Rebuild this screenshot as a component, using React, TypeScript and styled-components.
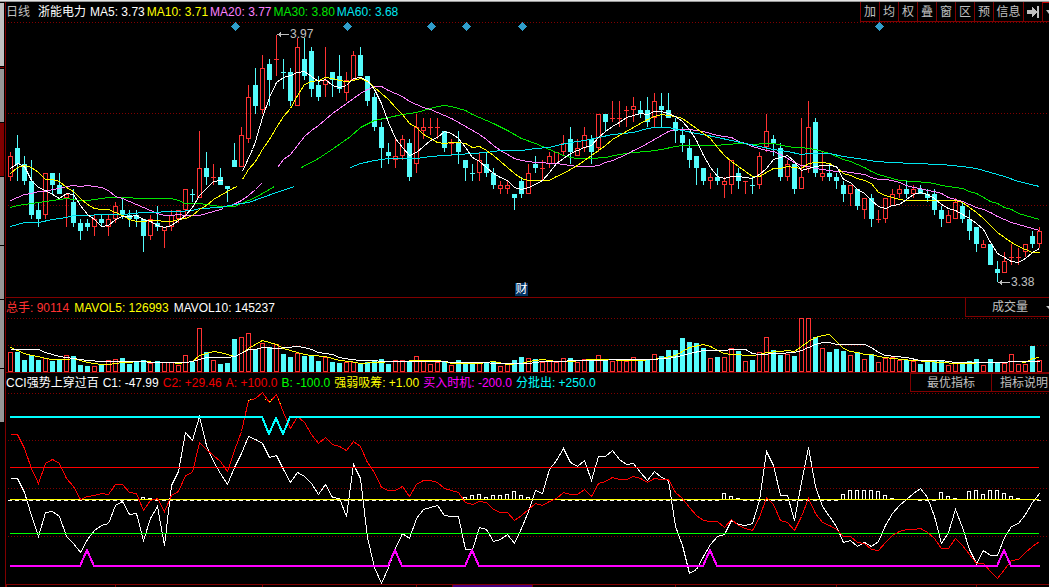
import React from "react";
import styled, { createGlobalStyle, css } from "styled-components";

/* ---------- palette ---------- */
const UP = "#ff3232";
const DOWN = "#54fcfc";
const FRAME = "#800000";
const GREY = "#c0c0c0";
const YELLOW = "#ffff00";
const PINK = "#ff80ff";
const GREEN = "#00e600";
const AQUA = "#00e6f0";

/* ---------- chart geometry ---------- */
const LEFT = 6;
const SPAN = 1043;
const STEP = 7;
const xOf = (i: number) => 10 + i * STEP;

/* ---------- data ---------- */
/* one candle: direction, high, body top, body bottom, low */
const CANDLES = `
u152,156,177,181 d135,148,164,181 d156,164,181,185 d160,181,215,219 d203,210,219,227 u173,173,215,219 d173,173,185,194
d173,185,194,194 u194,194,198,227 d189,202,223,227 d219,223,231,240 d219,223,227,231 u215,219,227,236 d215,219,223,227
u215,219,227,236 u202,206,219,223 d198,210,215,219 d210,215,219,227 d210,215,219,227 d219,219,236,252 u215,219,236,240
d206,223,227,231 u227,227,231,248 u210,215,227,231 u210,210,219,223 u189,189,210,218 d189,194,194,202 u131,168,198,198
d152,168,177,185 u164,177,177,185 d168,177,185,185 d186,186,189,202 d143,160,167,167 u127,135,167,167 u85,97,139,143
d68,85,106,114 u55,68,110,114 d59,64,80,106 u35,59,59,76 d59,72,72,89 d68,72,101,106 u38,47,106,106
d38,59,76,80 d47,51,89,97 d76,85,97,101 u47,80,85,97 d72,72,80,97 d55,76,89,93 u72,80,93,101
u51,55,80,80 d47,55,76,76 d76,76,101,106 d93,97,127,131 d122,127,148,168 d143,152,156,164 u139,156,160,168
u135,139,156,160 d139,143,177,181 u114,127,164,173 u118,127,131,139 u118,127,127,135 u118,127,127,139 d131,131,148,152
u139,143,143,156 d131,143,152,164 d160,160,168,181 d164,173,173,181 u152,160,173,181 d152,164,173,177 d168,173,185,189
u181,185,189,194 u181,185,189,194 d194,194,198,210 d177,181,194,198 u164,173,194,194 d156,164,168,173 u160,168,168,180
u152,156,164,168 u152,152,164,164 u135,143,152,156 d127,139,152,164 u139,148,156,156 u127,135,148,152 d135,139,152,164
u114,114,148,152 d114,114,122,131 u101,118,118,122 u101,118,118,127 u106,110,110,127 u97,106,110,122 d101,110,114,118
d97,110,122,127 u93,101,118,127 d93,106,110,127 d93,110,118,118 d118,122,131,143 d127,135,143,152 d139,148,160,168
d156,156,168,185 d168,168,181,185 u173,177,181,189 d168,177,181,185 u177,181,185,198 u160,160,185,194 d168,173,181,189
u181,181,181,194 d177,185,185,194 u152,156,185,189 u114,131,147,152 d135,139,143,156 d143,148,177,181 u160,164,177,181
d164,164,189,194 u118,177,189,189 u101,127,169,173 d118,122,173,177 u152,173,177,181 d164,173,177,181 d173,177,181,189
d181,185,194,202 u185,185,194,206 d189,189,206,210 u198,198,210,219 d194,198,219,227 u210,219,219,223 u198,198,219,223
u189,194,206,206 u185,189,194,198 d181,189,194,198 u185,189,194,198 d185,189,194,194 d189,194,198,202 d189,194,210,215
d206,210,219,227 u210,215,223,223 u198,202,219,219 d202,206,219,223 d210,219,231,240 d227,227,244,252 u240,244,248,248
d244,244,265,265 d261,269,273,282 u252,261,273,273 u244,257,257,265 u248,257,257,265 u244,244,252,257 d231,236,244,248
u227,231,244,248`
  .trim()
  .split(/\s+/)
  .map((c) => {
    const [high, top, bottom, low] = c.slice(1).split(",").map(Number);
    return { up: c[0] === "u", high, top, bottom, low };
  });

const VOLUME = `352 352 360 355 360 358 361 360 355 356 365 366 366 364 360 359 358 364 362 360 363 361 362 362 365 355 362 328 352
360 364 363 339 337 333 349 343 347 344 354 357 353 356 355 361 357 362 363 362
362 363 362 361 359 364 360 360 361 356 361 364 362 361 365 360 362 364 363 363 361 366 364 360 357 358 359 362 361 362 358
358 362 359 359 355 360 361 360 361 357 360 359 354 356 350 350 338 342 343
348 358 357 357 348 351 361 360 352 337 350 355 354 356 318 318 337 348 352 349 351 355 352 359 354 362 358 357 360 360 361
364 361 361 360 365 362 364 361 359 365 359 362 363 354 364 364 346 360`
  .split(/\s+/)
  .map(Number);

/* evenly spaced series: first candle index, then one level per candle */
const series = (start: number, ys: string) =>
  ys
    .trim()
    .split(/\s+/)
    .map((y, k) => `${xOf(start + k)},${y}`)
    .join(" ");

const MA5 = [
  series(0, "168 163 166 180 187 190 194 198 193 194 205 214 219 226 225 219 216 216 215 219 221 225 227 225 220 215 207 195 188 181 180") + " 222,180",
  "242,171 252,149 " +
    series(
      35,
      `141 117 97 82 77 75 72 71 76 81 79 85 87 85 78 77 80 89 103 122 138 147 155 152 146 140 137 131 133 138 147 157 161 167
      173 177 180 187 189 187 184 180 172 163 158 153 150 147 145 137 131 126 122 117 115 113 114 111 111 113 116 121 129 140 155
      167 176 178 176 176 177 178 174 168 159 157 155 161 170 168 166 165 165 166 179 182 189 193 200 206 208 205 204 199 194 192
      194 198 204 208 210 214 218 223 229 242 253 257 261 262 258 252 248`
    ),
];
const MA10 = [
  series(0, "173 167 165 167 172 179 179 181 187 191 198 204 208 209 209 212 215 219 221 221 220 220 221 221 219 218 215 209 205 199 195 191 187") + " 237,186",
  "242,179 " +
    series(
      34,
      `169 161 149 139 127 116 108 95 84 81 80 77 78 80 81 80 78 81 87 93 99 107 114 123 127 134 138 142 143 142 142 143 147
      146 150 155 161 167 173 178 180 180 180 180 176 173 169 165 160 155 150 145 139 135 131 127 123 119 116 114 115 116 118 123
      128 133 138 147 155 161 166 171 176 176 172 168 168 166 167 168 163 162 162 163 167 173 175 178 180 183 192 195 197 199 200
      200 200 200 200 200 200 200 202 207 212 218 225 232 237 242 246 249 252 252`
    ),
];
const MA20 = [
  series(0, "200 197 194 193 191 191 189 188 186 185 186 185 186 187 190 196 198 201 204 207 210 213 215 215 214 215 215 215 213 211 209") + " 223,208",
  "231,205 241,200 248,195 255,189 261,183",
  "277,167 " +
    series(
      39,
      `159 154 145 136 130 125 119 113 108 103 98 93 89 86 86 90 93 96 101 104 107 109 112 115 118 122 126 130 134 139 145 150
      154 158 160 161 162 162 163 163 164 165 166 166 166 165 162 160 157 154 150 147 143 139 135 131 129 129 129 130 131 133 135
      136 137 141 143 146 148 150 151 154 158 162 165 166 168 169 170 171 171 172 173 174 177 179 179 180 182 185 187 188 190 191
      193 197 199 201 204 207 209 212 216 219 222 224 226 228 230`
    ),
];
const MA30 = [
  series(0, "207 205 204 203 202 201 200 199 198 199 200 200 199 198 197 197 197 197 198 198 198 198 198 198 200 203 203 203 204 205 206 206 206 203 200 197 193") + " 274,186",
  `301,167 318,158 333,148 350,136 360,127 374,120 388,117 402,114 416,112 430,108 437,106 444,105 451,106 458,108 465,110 472,114
  479,117 493,123 507,130 521,138 535,143 542,146 549,149 556,152 563,155 570,157 577,158 591,158 605,157 619,154 633,152 647,151
  661,149 675,146 682,145 714,145 728,144 738,143 752,144 766,143 773,143 787,146 794,147 801,147 808,148 815,149 822,151 829,153
  836,156 843,159 850,161 857,164 864,167 871,171 878,174 885,176 892,178 899,180 913,181 927,182 934,183 941,185 955,187 962,188
  969,191 976,193 983,197 990,201 997,203 1004,207 1011,209 1018,213 1025,215 1032,217 1039,219`,
];
const MA60 = [
  `10,226 24,222 38,222 52,219 66,217 73,215 87,215 101,214 122,214 143,212 157,212 164,211 178,211 192,210 199,208 220,207
  234,204 248,202 262,197 276,192 294,186`,
  `350,167 360,163 374,160 388,158 416,158 430,156 444,155 458,154 486,152 500,150 521,150 535,148 549,147 556,145 570,142
  584,140 598,137 612,134 633,132 647,128 654,127 668,127 682,130 696,133 703,134 717,137 731,140 745,143 759,146 773,149
  787,151 801,154 808,153 829,153 843,156 857,158 875,161 892,162 913,163 941,164 962,166 976,168 990,172 1004,176 1018,181
  1039,186`,
];

const MAVOL5 = `10,347 17,350 24,353 31,355 38,356 45,358 52,359 66,359 73,358 80,360 87,362 101,364 108,364 122,362 143,361
  157,362 171,362 178,363 185,362 192,361 199,355 206,353 213,351 220,352 227,354 234,356 241,353 248,348 255,344 262,340
  269,342 276,344 283,348 290,350 297,352 304,354 311,355 325,356 332,358 339,360 350,361 360,363 374,362 395,361 423,360
  437,360 444,361 451,363 479,363 493,361 507,364 521,363 528,361 542,359 556,361 570,361 591,359 640,360 661,358 675,355
  682,351 689,347 703,344 710,346 717,350 724,353 731,354 752,355 759,354 766,352 780,351 787,350 794,351 801,346 808,341
  815,337 822,335 829,334 836,341 843,348 850,351 857,352 864,354 871,354 878,356 892,358 913,360 927,361 955,363 997,362
  1018,361 1025,362 1032,358 1039,357`;
const MAVOL10 = `10,349 38,349 45,352 52,354 59,356 73,358 87,360 101,361 115,361 136,361 157,362 185,362 192,361 199,359
  206,357 227,357 234,356 241,353 248,349 255,349 262,347 276,348 297,346 304,347 311,349 318,352 332,354 339,357 350,359
  360,360 395,361 444,361 451,362 479,362 500,363 528,363 542,361 563,361 570,360 647,359 668,358 682,355 689,353 703,350
  724,350 731,349 745,349 752,353 759,354 794,352 801,350 808,347 815,344 822,342 829,342 836,344 864,344 871,347 878,352
  885,355 906,357 920,360 941,360 955,362 997,362 1018,361 1039,361`;

const C1 = series(
  0,
  `478 478 492 515 536 512 511 516 536 543 552 539 530 525 523 505 501 514 513 540 518 506 545 485 471 432 440 416 445 461 473
  484 467 453 436 439 443 457 455 469 482 472 476 483 494 484 497 498 516 464 478 537 567 583 567 548 533 538 518 509 507 505
  515 516 516 549 549 527 529 541 539 534 543 528 511 490 493 469 460 448 462 466 460 480 456 456 450 459 464 463 472 480 471
  477 480 526 545 573 569 556 544 536 534 520 524 525 523 500 451 465 495 495 520 482 447 486 506 516 526 542 540 546 542 546
  541 525 513 505 499 493 488 497 516 543 532 509 527 549 563 550 555 555 537 526 523 514 502 493`
);
const C2 = series(
  0,
  `434 434 448 468 483 463 459 463 478 486 499 496 495 493 494 484 484 492 493 510 500 498 511 495 491 475 472 442 449 455 461
  471 450 431 400 398 392 402 394 412 428 416 422 434 443 437 444 446 450 441 446 462 472 487 490 490 486 496 484 480 480 482
  488 490 492 502 504 501 502 509 512 512 520 515 509 503 505 501 498 492 494 494 489 496 483 481 477 479 479 476 478 482 478
  479 479 492 498 507 515 520 521 521 527 519 525 528 530 517 497 504 520 522 530 516 498 513 522 525 529 536 536 542 543 549
  550 542 535 531 529 529 528 532 538 548 548 538 545 554 563 563 571 578 569 560 559 552 546 541`
);

/* white columns above the zero line: candle index -> top */
const COLUMNS: Record<number, number> = {
  19: 497, 20: 498, 65: 497, 66: 495, 67: 494, 68: 497, 69: 495, 70: 495, 71: 494, 72: 491, 73: 495, 74: 497,
  102: 493, 103: 496, 104: 498, 119: 494, 120: 490, 121: 490, 122: 490, 123: 490, 124: 491, 125: 495, 126: 498,
  133: 492, 134: 496, 135: 498, 137: 491, 138: 490, 139: 494, 140: 490, 141: 490, 142: 493, 143: 496, 144: 498,
};
const NO_DASH = new Set([75, 76, 77, 78, 127, 128, 129, 136, 145, 146]);

const BUY_SIGNALS = [11, 55, 66, 100, 142];
const BUY_LINE = [
  "10,566",
  ...BUY_SIGNALS.flatMap((i) => [`${xOf(i - 1)},566`, `${xOf(i)},550`, `${xOf(i + 1)},566`]),
  "1040,566",
].join(" ");

const EVENTS = [235, 347, 431, 466, 522, 879];

/* ---------- styles ---------- */
const Global = createGlobalStyle`
  * { box-sizing: border-box; }
  body {
    margin: 0;
    background: #000;
    overflow: hidden;
    font: 12px/16px "Liberation Sans", "Noto Sans CJK SC", sans-serif;
    color: ${GREY};
  }
`;

const Page = styled.div`
  display: flex;
  flex-direction: column;
`;

const TopEdge = styled.div`
  height: 2px;
  background: #e4e4e4;
  border-bottom: 1px solid #989898;
`;

const Body = styled.div`
  display: flex;
`;

const Gutter = styled.div`
  flex: none;
  width: 5px;
  padding: 1px 1px 0 0;
  display: flex;
  flex-direction: column;
  gap: 1px;
`;

const Tab = styled.div<{ $h: number; $color: string }>`
  height: ${(p) => p.$h}px;
  background: ${(p) => p.$color};
`;

const Main = styled.main`
  flex: 1;
  min-width: 0;
  border-left: 1px solid ${FRAME};
`;

const Panel = styled.section<{ $ruled?: boolean }>`
  ${(p) => p.$ruled && css`border-top: 1px solid ${FRAME};`}
`;

const Header = styled.header<{ $h: number }>`
  display: flex;
  justify-content: space-between;
  align-items: flex-start;
  height: ${(p) => p.$h}px;
`;

const Legend = styled.div<{ $gap: number }>`
  display: flex;
  align-items: center;
  gap: ${(p) => p.$gap}px;
  height: 100%;
  white-space: nowrap;
`;

const Item = styled.span<{ $color: string }>`
  color: ${(p) => p.$color};
`;

const Title = styled.h1`
  margin: 0 2px 0 6px;
  font: inherit;
  color: #fff;
`;

const Toolbar = styled.div`
  display: flex;
  flex: none;
`;

const ToolButton = styled.button<{ $w: number; $h: number; $top?: string; $clip?: boolean }>`
  display: flex;
  align-items: center;
  justify-content: ${(p) => (p.$clip ? "flex-start" : "center")};
  width: ${(p) => p.$w}px;
  height: ${(p) => p.$h}px;
  padding: 0 0 0 ${(p) => (p.$clip ? 8 : 0)}px;
  border: 0 solid ${FRAME};
  border-left-width: 1px;
  border-bottom-width: 1px;
  ${(p) => p.$top && css`border-top: 1px solid ${p.$top};`}
  background: #000;
  color: ${GREY};
  font: inherit;
  white-space: nowrap;
  overflow: hidden;
`;

const Picker = styled.label`
  position: relative;
  display: block;
  flex: none;
`;

const PickerSelect = styled.select`
  appearance: none;
  width: 84px;
  height: 19px;
  padding: 0 0 0 26px;
  border: 0 solid ${FRAME};
  border-left-width: 1px;
  border-bottom-width: 1px;
  border-radius: 0;
  background: #000;
  color: ${GREY};
  font: inherit;
`;

const PickerArrow = styled.svg`
  position: absolute;
  right: 0;
  top: 8px;
  pointer-events: none;
`;

const Plot = styled.div`
  position: relative;
`;

const Chart = styled.svg<{ $h: number }>`
  display: block;
  width: 100%;
  height: ${(p) => p.$h}px;
`;

const Mark = styled.span<{ $x: number; $y: number; $badge?: boolean }>`
  position: absolute;
  left: ${(p) => ((p.$x - LEFT) / SPAN) * 100}%;
  top: ${(p) => p.$y}px;
  line-height: 13px;
  ${(p) => p.$badge && css`
    width: 13px;
    text-align: center;
    background: #003264;
    color: #fff;
  `}
`;

/* ---------- drawing parts ---------- */
type PlotProps = { top: number; height: number; label: string; children: React.ReactNode };

function PlotArea({ top, height, label, children }: PlotProps) {
  return (
    <Chart
      $h={height}
      viewBox={`${LEFT} ${top} ${SPAN} ${height}`}
      preserveAspectRatio="none"
      shapeRendering="crispEdges"
      role="img"
      aria-label={label}
    >
      {children}
    </Chart>
  );
}

const Grid = ({ levels }: { levels: number[] }) => (
  <g fill="none" stroke={FRAME} strokeDasharray="1 2">
    {levels.map((y) => (
      <path key={y} d={`M8 ${y + 0.5}H1049`} />
    ))}
  </g>
);

const Curve = ({ lines, color, width = 1 }: { lines: string[]; color: string; width?: number }) => (
  <g fill="none" stroke={color} strokeWidth={width} transform="translate(.5 .5)">
    {lines.map((l, k) => (
      <polyline key={k} points={l} />
    ))}
  </g>
);

function Candle({ i }: { i: number }) {
  const { up, high, top, bottom, low } = CANDLES[i];
  const x = xOf(i);
  const color = up ? UP : DOWN;
  if (top === bottom) {
    return (
      <g fill={color}>
        <rect x={x - 2} y={top} width={5} height={1} />
        <rect x={x} y={high} width={1} height={low - high} />
      </g>
    );
  }
  return (
    <g fill={color}>
      <rect x={x} y={high} width={1} height={top - high} />
      <rect x={x} y={bottom} width={1} height={low - bottom} />
      {up ? (
        <rect x={x - 1.5} y={top + 0.5} width={4} height={bottom - top - 1} fill="none" stroke={UP} />
      ) : (
        <rect x={x - 2} y={top} width={5} height={bottom - top} />
      )}
    </g>
  );
}

const VolumeBar = ({ i }: { i: number }) => {
  const x = xOf(i);
  const y = VOLUME[i];
  return CANDLES[i].up ? (
    <rect x={x - 1.5} y={y + 0.5} width={4} height={371 - y} fill="none" stroke={UP} />
  ) : (
    <rect x={x - 2} y={y} width={5} height={372 - y} fill={DOWN} />
  );
};

/* ---------- page ---------- */
const TOOLS = ["加", "均", "权", "叠", "窗", "区", "预"];
const GUTTER: [number, string][] = [
  [63, GREY], [1, FRAME], [53, "#969696"], [53, FRAME], [68, "#969696"], [53, "#969696"], [68, "#969696"], [53, "#969696"],
];

export default function App() {
  return (
    <Page>
      <Global />
      <TopEdge />
      <Body>
        <Gutter>
          {GUTTER.map(([h, c], k) => (
            <Tab key={k} $h={h} $color={c} />
          ))}
        </Gutter>
        <Main>
          <Panel>
            <Header $h={20}>
              <Legend $gap={2}>
                <Item $color={GREY}>日线</Item>
                <Title>浙能电力</Title>
                <Item $color="#fff">MA5: 3.73</Item>
                <Item $color={YELLOW}>MA10: 3.71</Item>
                <Item $color={PINK}>MA20: 3.77</Item>
                <Item $color={GREEN}>MA30: 3.80</Item>
                <Item $color={AQUA}>MA60: 3.68</Item>
              </Legend>
              <Toolbar>
                {TOOLS.map((t) => (
                  <ToolButton key={t} $w={19} $h={20}>{t}</ToolButton>
                ))}
                <ToolButton $w={30} $h={20}>信息</ToolButton>
                <ToolButton $w={19} $h={20} aria-label="移到最后">
                  <svg width="12" height="12" viewBox="0 0 12 12" fill={GREY} shapeRendering="crispEdges">
                    <path d="M0 4H5V0L10 6L5 12V8H0ZM10 0H12V12H10Z" />
                  </svg>
                </ToolButton>
                <ToolButton $w={7} $h={20} $top="#d00000" aria-label="更多">
                  <svg width="6" height="4" viewBox="0 0 6 4" fill={GREY}>
                    <path d="M3 0H6V4Z" />
                  </svg>
                </ToolButton>
              </Toolbar>
            </Header>
            <Plot>
              <PlotArea top={22} height={275} label="日线">
                <Grid levels={[22, 113, 205]} />
                {CANDLES.map((_, i) => (
                  <Candle key={i} i={i} />
                ))}
                <Curve lines={MA30} color={GREEN} />
                <Curve lines={MA20} color={PINK} />
                <Curve lines={MA60} color={AQUA} />
                <Curve lines={MA10} color={YELLOW} />
                <Curve lines={MA5} color="#fff" />
                {EVENTS.map((x) => (
                  <path key={x} d={`M${x + 0.5} 22L${x + 5} 26.5L${x + 0.5} 31L${x - 4} 26.5Z`} fill="#2f9dcb" />
                ))}
                <g fill={GREY}>
                  <path d="M277 34H289V35H277ZM277 34.5L281 32V37Z" />
                  <path d="M998 282H1010V283H998ZM998 282.5L1002 280V285Z" />
                </g>
              </PlotArea>
              <Mark $x={290} $y={6}>3.97</Mark>
              <Mark $x={1011} $y={254}>3.38</Mark>
              <Mark $x={515} $y={261} $badge>财</Mark>
            </Plot>
          </Panel>

          <Panel $ruled>
            <Header $h={20}>
              <Legend $gap={5}>
                <Item $color={UP}>总手: 90114</Item>
                <Item $color={YELLOW}>MAVOL5: 126993</Item>
                <Item $color="#fff">MAVOL10: 145237</Item>
              </Legend>
              <Picker>
                <PickerSelect aria-label="副图指标" defaultValue="成交量">
                  <option>成交量</option>
                </PickerSelect>
                <PickerArrow width="3" height="4" viewBox="0 0 3 4" fill={GREY}>
                  <path d="M0 0H3V3Z" />
                </PickerArrow>
              </Picker>
            </Header>
            <PlotArea top={318} height={55} label="成交量">
              <Grid levels={[318, 345]} />
              {VOLUME.map((_, i) => (
                <VolumeBar key={i} i={i} />
              ))}
              <rect x={6} y={372} width={1043} height={1} fill={FRAME} />
              <Curve lines={[MAVOL5]} color={YELLOW} />
              <Curve lines={[MAVOL10]} color="#fff" />
            </PlotArea>
          </Panel>

          <Panel>
            <Header $h={19}>
              <Legend $gap={4}>
                <Item $color="#fff">CCI强势上穿过百</Item>
                <Item $color="#fff">C1: -47.99</Item>
                <Item $color="#f00000">C2: +29.46</Item>
                <Item $color="#f00000">A: +100.0</Item>
                <Item $color="#00ff00">B: -100.0</Item>
                <Item $color={YELLOW}>强弱吸筹: +1.00</Item>
                <Item $color="#ff00ff">买入时机: -200.0</Item>
                <Item $color="#00ffff">分批出: +250.0</Item>
              </Legend>
              <Toolbar>
                <ToolButton $w={81} $h={19} $top={FRAME}>最优指标</ToolButton>
                <ToolButton $w={58} $h={19} $top={FRAME} $clip>指标说明</ToolButton>
              </Toolbar>
            </Header>
            <PlotArea top={392} height={195} label="CCI强势上穿过百">
              <Grid levels={[393, 440, 488, 536]} />
              <Curve lines={[C1]} color="#fff" />
              <rect x={10} y={467} width={1029} height={1} fill="#ff0000" />
              <rect x={10} y={533} width={1029} height={1} fill="#00ff00" />
              {CANDLES.map((_, i) => {
                const x = xOf(i);
                const top = COLUMNS[i];
                if (NO_DASH.has(i)) return null;
                return top ? (
                  <rect key={i} x={x - 1.5} y={top + 0.5} width={3} height={499 - top} fill="none" stroke="#fff" />
                ) : (
                  <rect key={i} x={x - 2} y={500} width={4} height={1} fill="#fff" />
                );
              })}
              <rect x={10} y={499} width={1029} height={1} fill={YELLOW} />
              <Curve lines={[C2]} color="#ff0000" />
              <path
                fill={YELLOW}
                d="M248 400h1v1h-1zM250 399h1v1h-1zM265 399h1v1h-1zM269 401h2v1h-2zM271 399h1v1h-1zM278 399h1v1h-1zM280 403h1v1h-1z"
              />
              <g fill="none" strokeWidth={2}>
                <polyline stroke="#00ffff" points="10,417 262,417 269,434 276,418 283,434 290,417 1040,417" />
                <polyline stroke="#ff00ff" points={BUY_LINE} />
              </g>
              <g fill={FRAME}>
                <rect x={6} y={584} width={1043} height={1} />
                {[6, 115, 262, 416, 452, 532, 675, 836, 976].map((x) => (
                  <rect key={x} x={x} y={585} width={1} height={2} />
                ))}
              </g>
              <rect x={453} y={585} width={79} height={2} fill="#400080" />
            </PlotArea>
          </Panel>
        </Main>
      </Body>
    </Page>
  );
}
